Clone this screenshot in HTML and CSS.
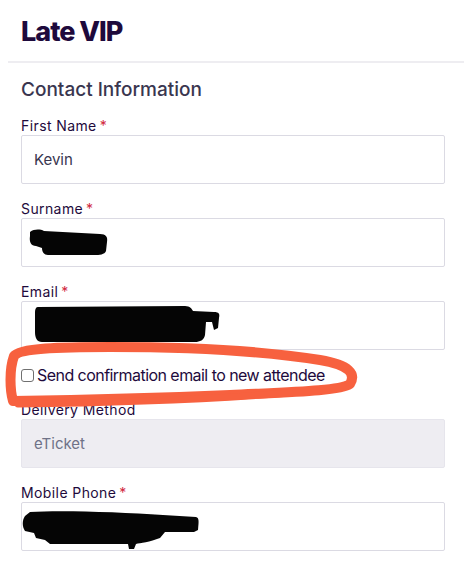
FILE: index.html
```html
<!DOCTYPE html>
<html lang="en">
<head>
<meta charset="utf-8">
<title>Late VIP</title>
<link rel="stylesheet" href="styles.css">
</head>
<body>
<div class="page">
  <header class="header">
    <h1 class="title">Late VIP</h1>
  </header>
  <section class="form">
    <h2 class="section-title">Contact Information</h2>
    <div class="field">
      <div class="label">First Name<span class="req">*</span></div>
      <div class="input">Kevin</div>
    </div>
    <div class="field">
      <div class="label">Surname<span class="req">*</span></div>
      <div class="input"></div>
    </div>
    <div class="field field-tight">
      <div class="label">Email<span class="req">*</span></div>
      <div class="input"></div>
    </div>
    <label class="check-row">
      <span class="checkbox"></span>
      <span class="check-text">Send confirmation email to new attendee</span>
    </label>
    <div class="field">
      <div class="label">Delivery Method</div>
      <div class="input input-disabled">eTicket</div>
    </div>
    <div class="field">
      <div class="label">Mobile Phone<span class="req">*</span></div>
      <div class="input"></div>
    </div>
  </section>
  <svg class="markup" width="464" height="564" viewBox="0 0 464 564" aria-hidden="true">
    <path class="redact" d="M30 232 C34 229 40 229 44 231 L100 234 C106 234 108 237 107 242 L106 251 C104 256 95 255 88 255 L48 255 C44 255 42 252 42 248 L36 246 C31 246 29 242 30 236 Z"/>
    <path class="redact" d="M38 307 L185 306 C190 306 192 309 193 311 L214 312 C219 312 220 314 219 318 L218 328 L214 330 L212 322 L206 322 L205 335 C204 340 200 342 195 342 L42 342 C37 342 35 338 35 332 L35 312 C35 309 36 307 38 307 Z"/>
    <path class="redact" d="M30 512 C60 510 120 512 163 515 L196 517 C199 518 199 520 198 530 L194 532 L165 532 L160 538 C150 542 140 543 136 544 L134 549 L129 549 L128 544 L50 544 L45 540 L36 538 L34 533 L25 531 C22 527 22 520 25 516 Z"/>
    <path class="loop" d="M13 401 C10 390 9 370 14 356 C20 348 60 347 110 347 C200 347 270 352 320 360 C350 365 356 374 350 384 C340 391 290 392 230 395 C160 398 80 400 13 401 Z"/>
    <path class="loop loop-thick" d="M18 404 C100 403 200 400 290 393"/>
  </svg>
</div>
</body>
</html>
```

FILE: styles.css
```css
* { box-sizing: border-box; }

html, body {
  margin: 0;
  padding: 0;
  background: #ffffff;
}

body {
  font-family: Inter, "Noto Sans", sans-serif;
  color: #1e0a3c;
  width: 464px;
  height: 564px;
  overflow: hidden;
}

.page {
  position: relative;
  width: 464px;
  height: 564px;
}

.header {
  margin-left: 8px;
  padding: 15px 0 13px 13px;
  border-bottom: 2px solid #eeedf1;
}

.title {
  margin: 0;
  font-size: 27px;
  line-height: 33px;
  font-weight: 800;
  color: #1e0a3c;
  letter-spacing: -1px;
}

.form {
  padding: 15px 19px 0 21px;
}

.section-title {
  margin: 0 0 14px;
  font-size: 19px;
  line-height: 24px;
  font-weight: 500;
  color: #39364f;
}

.field {
  display: flex;
  flex-direction: column;
  margin-bottom: 15px;
}

.field-tight {
  margin-bottom: 0;
}

.label {
  font-size: 14px;
  line-height: 19px;
  color: #1e0a3c;
  letter-spacing: 0.4px;
}

.req {
  color: #d1293d;
  margin-left: 3px;
}

.input {
  height: 49px;
  border: 1px solid #dbdae3;
  border-radius: 2px;
  padding: 0 12px;
  display: flex;
  align-items: center;
  font-size: 15px;
  color: #39364f;
}

.input-disabled {
  background: #eeedf2;
  border-color: #e6e5ec;
  color: #6f7287;
}

.check-row {
  height: 50px;
  display: flex;
  align-items: center;
  gap: 3px;
}

.checkbox {
  width: 13px;
  height: 13px;
  border: 1px solid #707070;
  border-radius: 3px;
  background: #fff;
  flex: none;
}

.check-text {
  font-size: 16px;
  line-height: 20px;
  color: #1e0a3c;
  letter-spacing: -0.55px;
}

.markup {
  position: absolute;
  left: 0;
  top: 0;
  pointer-events: none;
}

.redact {
  fill: #050505;
}

.loop {
  fill: none;
  stroke: #f7613f;
  stroke-width: 10;
  stroke-linecap: round;
  stroke-linejoin: round;
}

.loop-thick {
  stroke-width: 7;
}
```
